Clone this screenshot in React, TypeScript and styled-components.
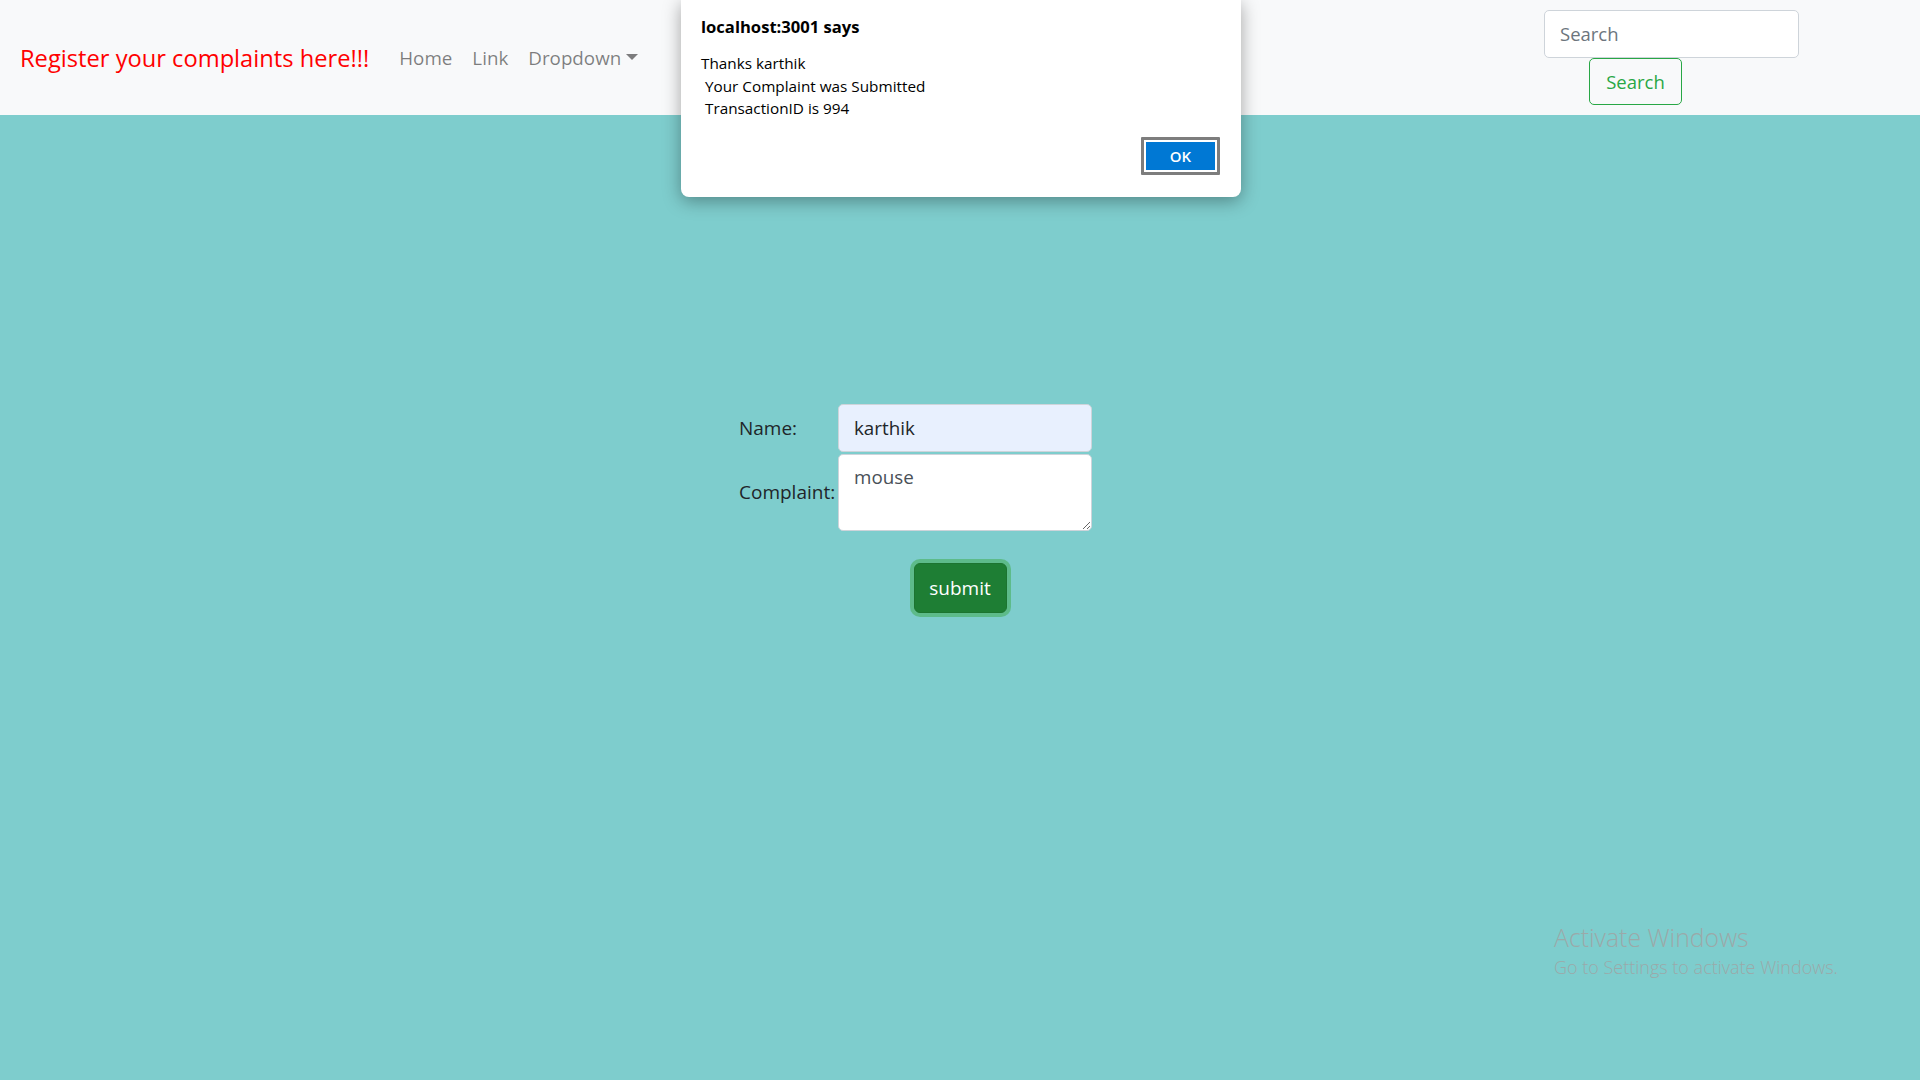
import React from "react";
import styled, { createGlobalStyle } from "styled-components";

const GlobalStyle = createGlobalStyle`
  html, body {
    margin: 0;
    padding: 0;
    background: #7ecdcd;
    font-family: "Open Sans", "Noto Sans", Arial, sans-serif;
    color: #212529;
  }
  * { box-sizing: border-box; }
`;

const Page = styled.div`
  min-height: 1080px;
  position: relative;
  background: #7ecdcd;
`;

const Navbar = styled.nav`
  display: flex;
  align-items: center;
  height: 115px;
  padding: 10px 20px;
  background: #f8f9fa;
`;

const Brand = styled.a`
  color: #ff0000;
  font-size: 23.7px;
  margin-right: 20px;
  padding-top: 2px;
  white-space: nowrap;
  text-decoration: none;
  line-height: 1.5;
`;

const NavList = styled.ul`
  display: flex;
  align-items: center;
  list-style: none;
  margin: 0;
  padding: 2px 0 0;
`;

const NavLink = styled.a`
  display: flex;
  align-items: center;
  padding: 10px;
  font-size: 18.8px;
  line-height: 1.5;
  color: rgba(0, 0, 0, 0.5);
  text-decoration: none;
`;

const Caret = styled.span`
  display: inline-block;
  margin-left: 5px;
  border-top: 6px solid rgba(0, 0, 0, 0.5);
  border-left: 6px solid transparent;
  border-right: 6px solid transparent;
  transform: translateY(-2px);
`;

const SearchForm = styled.form`
  display: flex;
  flex-direction: column;
  align-items: flex-start;
  margin-left: auto;
  margin-right: 101px;
`;

const SearchInput = styled.input`
  width: 255px;
  height: 47.5px;
  padding: 7.5px 15px;
  font-family: inherit;
  font-size: 18.5px;
  color: #495057;
  background: #fff;
  border: 1px solid #ced4da;
  border-radius: 5px;
  outline: none;
  &::placeholder { color: #6c757d; }
`;

const SearchButton = styled.button`
  margin-left: 45px;
  width: 93px;
  height: 47.5px;
  font-family: inherit;
  font-size: 18.5px;
  color: #28a745;
  background: transparent;
  border: 1px solid #28a745;
  border-radius: 5px;
  padding: 0;
`;

const Main = styled.main`
  display: flex;
  flex-direction: column;
  align-items: center;
  padding-top: 287px;
`;

const FormTable = styled.table`
  border-spacing: 2px;
  margin-right: 89px;
`;

const LabelCell = styled.td`
  width: 97px;
  padding: 0;
  font-size: 19px;
  color: #212529;
  vertical-align: middle;
  white-space: nowrap;
`;

const FieldCell = styled.td`
  padding: 0;
`;

const TextField = styled.input<{ $filled?: boolean }>`
  display: block;
  width: 254px;
  height: 47.5px;
  padding: 7.5px 15px;
  font-family: inherit;
  font-size: 18.8px;
  color: #212529;
  background: ${(p) => (p.$filled ? "#e8f0fe" : "#fff")};
  border: 1px solid #ced4da;
  border-radius: 5px;
  outline: none;
`;

const TextArea = styled.textarea`
  display: block;
  width: 254px;
  height: 77px;
  padding: 7.5px 15px;
  font-family: inherit;
  font-size: 18.8px;
  line-height: 30px;
  color: #495057;
  background: #fff;
  border: 1px solid #ced4da;
  border-radius: 5px;
  outline: none;
  resize: both;
`;

const SubmitButton = styled.button`
  margin-top: 30px;
  width: 93px;
  height: 50px;
  font-family: inherit;
  font-size: 19px;
  color: #fff;
  background: #1e7e34;
  border: 1px solid #1c7430;
  border-radius: 6px;
  box-shadow: 0 0 0 4px rgba(80, 180, 110, 0.7);
  padding: 0;
`;

const AlertDialog = styled.div`
  position: absolute;
  top: 0;
  left: 681px;
  width: 560px;
  height: 197px;
  background: #fff;
  border-radius: 0 0 8px 8px;
  box-shadow: 0 4px 18px rgba(0, 0, 0, 0.35);
  padding: 16px 20px 0 20px;
  display: flex;
  flex-direction: column;
  font-family: "Open Sans", "Noto Sans", Arial, sans-serif;
  color: #000;
`;

const DialogTitle = styled.div`
  font-weight: 700;
  font-size: 16.6px;
  line-height: 22px;
  margin-bottom: 14px;
`;

const DialogText = styled.div`
  font-size: 15.3px;
  line-height: 22.6px;
  white-space: pre-wrap;
`;

const DialogActions = styled.div`
  display: flex;
  justify-content: flex-end;
  margin-top: 17px;
  margin-right: 1px;
`;

const OkButton = styled.button`
  width: 79px;
  height: 38px;
  padding: 2px;
  border: 3px solid #7d7d7d;
  background: #fff;
  border-radius: 1px;
  display: flex;
  align-items: stretch;
  justify-content: stretch;
`;

const OkInner = styled.span`
  flex: 1;
  display: flex;
  align-items: center;
  justify-content: center;
  background: #0078d4;
  color: #fff;
  font-family: "Open Sans", Arial, sans-serif;
  font-weight: 600;
  font-size: 15px;
`;

const Watermark = styled.div`
  position: absolute;
  left: 1554px;
  top: 922px;
  color: #9ba9a9;
  font-family: "Open Sans", "Noto Sans", Arial, sans-serif;
  font-weight: 300;
  line-height: 1.25;
`;

const WatermarkTitle = styled.div`
  font-size: 24.8px;
`;

const WatermarkSub = styled.div`
  font-size: 18px;
  margin-top: 3px;
`;

export default function App() {
  return (
    <Page>
      <GlobalStyle />
      <Navbar>
        <Brand href="#">Register your complaints here!!!</Brand>
        <NavList>
          <li><NavLink href="#">Home</NavLink></li>
          <li><NavLink href="#">Link</NavLink></li>
          <li>
            <NavLink href="#">
              Dropdown<Caret />
            </NavLink>
          </li>
        </NavList>
        <SearchForm onSubmit={(e) => e.preventDefault()}>
          <SearchInput type="search" placeholder="Search" aria-label="Search" />
          <SearchButton type="submit">Search</SearchButton>
        </SearchForm>
      </Navbar>

      <Main>
        <FormTable>
          <tbody>
            <tr>
              <LabelCell>Name:</LabelCell>
              <FieldCell>
                <TextField $filled defaultValue="karthik" />
              </FieldCell>
            </tr>
            <tr>
              <LabelCell>Complaint:</LabelCell>
              <FieldCell>
                <TextArea rows={2} defaultValue="mouse" />
              </FieldCell>
            </tr>
          </tbody>
        </FormTable>
        <SubmitButton type="button">submit</SubmitButton>
      </Main>

      <AlertDialog role="alertdialog">
        <DialogTitle>localhost:3001 says</DialogTitle>
        <DialogText>{"Thanks karthik\n Your Complaint was Submitted\n TransactionID is 994"}</DialogText>
        <DialogActions>
          <OkButton type="button">
            <OkInner>OK</OkInner>
          </OkButton>
        </DialogActions>
      </AlertDialog>

      <Watermark>
        <WatermarkTitle>Activate Windows</WatermarkTitle>
        <WatermarkSub>Go to Settings to activate Windows.</WatermarkSub>
      </Watermark>
    </Page>
  );
}
